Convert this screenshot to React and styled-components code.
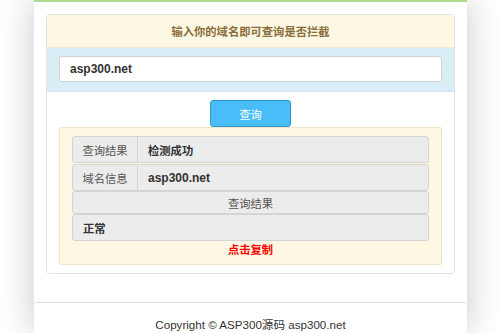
import styled, { createGlobalStyle } from "styled-components";

const GlobalStyle = createGlobalStyle`
  html, body {
    margin: 0;
    padding: 0;
    background: #fff;
    overflow: hidden;
  }
  body {
    font-family: "Liberation Sans", "Noto Sans CJK SC", sans-serif;
    color: #333;
  }
`;

const Page = styled.div`
  width: 500px;
  height: 333px;
  overflow: hidden;
`;

const Column = styled.div`
  width: 433px;
  margin-left: 34px;
  min-height: 333px;
  background: #fff;
  border-top: 2px solid #a9dc8e;
  box-shadow: 0 0 34px rgba(0, 0, 0, 0.22);
  box-sizing: border-box;
  padding-top: 12px;
`;

const Panel = styled.div`
  margin: 0 12px 0 12px;
  border: 1px solid #e3e3e3;
  border-radius: 4px;
  overflow: hidden;
`;

const Heading = styled.div`
  height: 32px;
  background: #fcf8e3;
  color: #8a6d3b;
  font-size: 11.3px;
  font-weight: bold;
  display: flex;
  align-items: center;
  justify-content: center;
  border-bottom: 1px solid #f3ebd0;
`;

const InputBand = styled.div`
  background: #d9edf7;
  padding: 8px 12px 9px;
  border-bottom: 1px solid #d4e4ec;
`;

const DomainInput = styled.div`
  height: 26px;
  box-sizing: border-box;
  background: #fff;
  border: 1px solid #d2d2d2;
  border-radius: 3px;
  padding-left: 10px;
  display: flex;
  align-items: center;
  font-size: 12px;
  font-weight: bold;
  color: #333;
`;

const Body = styled.div`
  padding: 8px 12px 8px;
  display: flex;
  flex-direction: column;
  align-items: center;
`;

const QueryButton = styled.button`
  width: 81px;
  height: 27px;
  background: #48bdf7;
  border: 1px solid #3197d4;
  border-radius: 3px;
  color: #fff;
  font-family: "Noto Sans CJK SC", sans-serif;
  font-size: 11.3px;
  padding: 0;
`;

const ResultBox = styled.div`
  align-self: stretch;
  background: #fdf7e4;
  border: 1px solid #efe6c9;
  border-radius: 2px;
  padding: 8px 12px 7px;
  display: flex;
  flex-direction: column;
`;

const Row = styled.div`
  display: flex;
  height: ${(p) => p.$h}px;
  box-sizing: border-box;
  background: #ececec;
  border: 1px solid #d4d4d4;
  border-radius: 3px;
  margin-bottom: ${(p) => (p.$gap ? 1 : 0)}px;
  font-size: 11.3px;
`;

const Label = styled.div`
  width: 64px;
  flex: none;
  border-right: 1px solid #d4d4d4;
  display: flex;
  align-items: center;
  justify-content: center;
  color: #555;
`;

const Value = styled.div`
  flex: 1;
  display: flex;
  align-items: center;
  justify-content: ${(p) => (p.$center ? "center" : "flex-start")};
  padding-left: ${(p) => (p.$center ? 0 : 10)}px;
  font-weight: ${(p) => (p.$bold ? "bold" : "normal")};
  color: ${(p) => (p.$bold ? "#333" : "#555")};
  font-size: ${(p) => (p.$latin ? "12px" : "11.3px")};
`;

const CopyLink = styled.div`
  text-align: center;
  color: #ff0000;
  font-weight: bold;
  font-size: 11.3px;
  margin-top: 2px;
  line-height: 14px;
`;

const Footer = styled.div`
  margin-top: 28px;
  border-top: 1px solid #e2e2e2;
  border-radius: 4px 4px 0 0;
  padding-top: 13px;
  text-align: center;
  font-size: 11.6px;
  color: #333;
`;

export default function App() {
  return (
    <Page>
      <GlobalStyle />
      <Column>
        <Panel>
          <Heading>输入你的域名即可查询是否拦截</Heading>
          <InputBand>
            <DomainInput>asp300.net</DomainInput>
          </InputBand>
          <Body>
            <QueryButton>查询</QueryButton>
            <ResultBox>
              <Row $h={27} $gap>
                <Label>查询结果</Label>
                <Value $bold>检测成功</Value>
              </Row>
              <Row $h={27}>
                <Label>域名信息</Label>
                <Value $bold $latin>asp300.net</Value>
              </Row>
              <Row $h={23}>
                <Value $center>查询结果</Value>
              </Row>
              <Row $h={27}>
                <Value $bold>正常</Value>
              </Row>
              <CopyLink>点击复制</CopyLink>
            </ResultBox>
          </Body>
        </Panel>
        <Footer>Copyright © ASP300源码 asp300.net</Footer>
      </Column>
    </Page>
  );
}
